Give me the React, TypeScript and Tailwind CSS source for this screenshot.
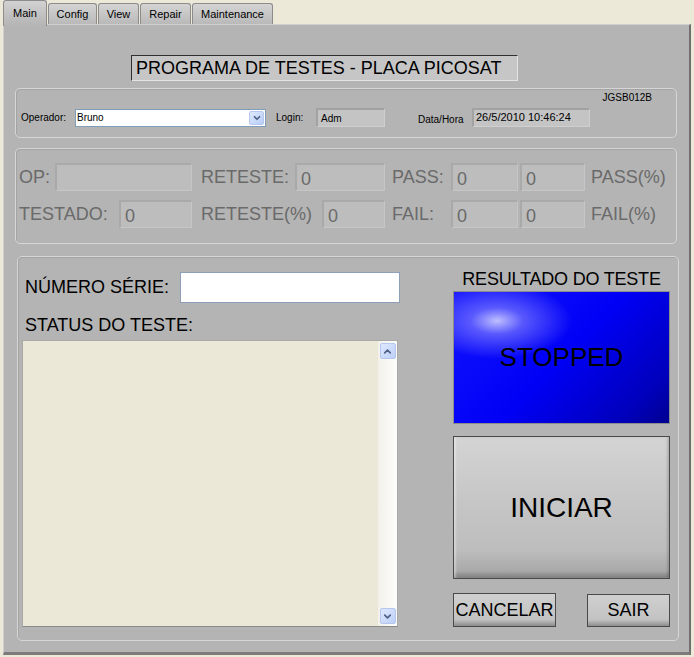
import { ChevronDown, ChevronUp } from 'lucide-react'

const tabs = [
  { label: 'Main', w: 'w-[44px]', active: true },
  { label: 'Config', w: 'w-[49px]', active: false },
  { label: 'View', w: 'w-[41px]', active: false },
  { label: 'Repair', w: 'w-[51px]', active: false },
  { label: 'Maintenance', w: 'w-[81px]', active: false },
]

function Field({ w, value }: { w: string; value?: string }) {
  return (
    <div
      className={`${w} h-[28px] bg-[#bdbdbd] border-t-2 border-l-2 border-[#a9a9a9] border-r border-b border-r-[#c6c6c6] border-b-[#c6c6c6] pl-[4px] pt-[2px] text-[18px] leading-[24px] text-[#6a6a6a]`}
    >
      {value}
    </div>
  )
}

function XpArrow({ up }: { up?: boolean }) {
  return (
    <div className="w-[16px] h-[16px] rounded-[2px] border border-[#b5c6ef] bg-[linear-gradient(135deg,#dfe8fd,#bcd0fa)] flex items-center justify-center">
      {up ? (
        <ChevronUp className="w-[11px] h-[11px] text-[#4d6185]" strokeWidth={3.5} />
      ) : (
        <ChevronDown className="w-[11px] h-[11px] text-[#4d6185]" strokeWidth={3.5} />
      )}
    </div>
  )
}

export default function App() {
  return (
    <div className="w-[694px] h-[657px] bg-[#ece9d8] font-['Liberation_Sans',Arial,sans-serif] text-black overflow-hidden">
      {/* tab strip */}
      <div className="flex items-end h-[24px] pl-[3px] gap-[1px]">
        {tabs.map((t) => (
          <div
            key={t.label}
            className={`${t.w} ${
              t.active
                ? 'h-[26px] -mb-[2px] relative z-10 pt-[4px] bg-[linear-gradient(to_bottom,#d2d2d2,#b4b4b4)]'
                : 'h-[21px] pt-[2px] bg-[linear-gradient(to_bottom,#d4d4d4,#b9b9b9)]'
            } border border-b-0 border-[#8c8c8c] rounded-t-[3px] text-[11px] flex items-start justify-center`}
          >
            {t.label}
          </div>
        ))}
      </div>

      {/* main panel */}
      <div className="ml-[3px] w-[688px] h-[631px] bg-[#b4b4b4] border-t border-l border-t-[#cfcfcf] border-l-[#d0d0d0] border-r-2 border-b-[3px] border-r-[#6f6f6f] border-b-[#7b7b7b] flex flex-col">
        <div className="mt-[30px] ml-[127px] w-[387px] h-[26px] bg-[#c6c6c6] border-t border-l border-t-[#303030] border-l-[#303030] border-r border-b border-r-[#e4e4e4] border-b-[#e4e4e4] text-[18px] leading-[24px] pl-[4px] whitespace-nowrap">
          PROGRAMA DE TESTES - PLACA PICOSAT
        </div>

        {/* operador box */}
        <div className="mt-[7px] ml-[11px] w-[662px] h-[50px] rounded-[5px] border border-[#d6d6d6] shadow-[inset_1px_1px_0_#a4a4a4] flex flex-col">
          <div className="h-[14px] mt-[2px] text-[10px] leading-[14px] text-right pr-[24px]">JGSB012B</div>
          <div className="flex items-center mt-[3px] text-[10px]">
            <span className="ml-[5px] w-[54px]">Operador:</span>
            <div className="w-[191px] h-[18px] bg-white border border-[#7f9db9] flex items-center justify-between pl-[1px]">
              <span className="text-[10px]">Bruno</span>
              <div className="w-[15px] h-[14px] mr-[1px] rounded-[2px] bg-[linear-gradient(135deg,#dfe8fd,#b8cdf8)] border border-[#b5c6ef] flex items-center justify-center">
                <ChevronDown className="w-[10px] h-[10px] text-[#4d6185]" strokeWidth={4} />
              </div>
            </div>
            <span className="ml-[10px] w-[40px]">Login:</span>
            <div className="w-[69px] h-[19px] bg-[#c4c4c4] border-t-2 border-l-2 border-[#a2a2a2] border-r border-b border-r-[#cfcfcf] border-b-[#cfcfcf] pl-[3px] pt-[2px] leading-[13px]">
              Adm
            </div>
            <span className="ml-[33px] w-[54px] mt-[4px]">Data/Hora</span>
            <div className="w-[118px] h-[19px] bg-[#c4c4c4] border-t-2 border-l-2 border-[#a2a2a2] border-r border-b border-r-[#cfcfcf] border-b-[#cfcfcf] pl-[2px] pt-[1px] leading-[13px] text-[11px]">
              26/5/2010 10:46:24
            </div>
          </div>
        </div>

        {/* counters box */}
        <div className="mt-[10px] ml-[11px] w-[662px] h-[96px] rounded-[5px] border border-[#d6d6d6] shadow-[inset_1px_1px_0_#a4a4a4] pt-[14px] flex flex-col gap-[9px] text-[18px] text-[#6a6a6a]">
          <div className="flex items-center pl-[3px]">
            <span className="w-[36px]">OP:</span>
            <Field w="w-[137px]" />
            <span className="ml-[9px] w-[94px]">RETESTE:</span>
            <Field w="w-[90px]" value="0" />
            <span className="ml-[7px] w-[59px]">PASS:</span>
            <Field w="w-[67px]" value="0" />
            <div className="ml-[2px]" />
            <Field w="w-[65px]" value="0" />
            <span className="ml-[6px]">PASS(%)</span>
          </div>
          <div className="flex items-center pl-[3px]">
            <span className="w-[100px]">TESTADO:</span>
            <Field w="w-[73px]" value="0" />
            <span className="ml-[9px] w-[121px]">RETESTE(%)</span>
            <Field w="w-[63px]" value="0" />
            <span className="ml-[7px] w-[59px]">FAIL:</span>
            <Field w="w-[67px]" value="0" />
            <div className="ml-[2px]" />
            <Field w="w-[65px]" value="0" />
            <span className="ml-[6px]">FAIL(%)</span>
          </div>
        </div>

        {/* test box */}
        <div className="mt-[12px] ml-[13px] w-[662px] h-[385px] rounded-[5px] border border-[#d6d6d6] shadow-[inset_1px_1px_0_#a4a4a4] flex text-[18px]">
          <div className="w-[382px] ml-[4px] flex flex-col">
            <div className="flex items-center mt-[15px] h-[31px]">
              <span className="ml-[3px] w-[155px]">NÚMERO SÉRIE:</span>
              <div className="w-[220px] h-[31px] bg-white border border-[#8ea0b8]" />
            </div>
            <div className="h-[37px] pl-[3px] pt-[11px] leading-[22px]">STATUS DO TESTE:</div>
            <div className="w-[376px] h-[287px] bg-[#ebe8d8] border border-[#a8a8a8] border-b-[#8a8a8a] flex justify-end">
              <div className="w-[19px] h-full bg-[linear-gradient(to_right,#f2f1ea,#fdfdfb)] flex flex-col justify-between items-center py-[2px]">
                <XpArrow up />
                <XpArrow />
              </div>
            </div>
          </div>

          <div className="ml-[49px] w-[217px] flex flex-col">
            <div className="mt-[11px] h-[23px] leading-[22px] text-center whitespace-nowrap tracking-[-0.2px]">RESULTADO DO TESTE</div>
            <div className="h-[133px] bg-[radial-gradient(ellipse_75px_38px_at_20%_22%,rgba(200,200,255,0.95)_0%,rgba(140,140,255,0.6)_35%,rgba(40,40,255,0)_100%),linear-gradient(135deg,#1414ff_0%,#0000f6_50%,#0000bc_85%,#000090_100%)] border border-[#8c8c8c] flex items-center justify-center text-[26px]">
              STOPPED
            </div>
            <div className="mt-[12px] h-[143px] border border-[#4a4a4a] bg-[linear-gradient(to_bottom,#d4d4d4_0%,#c6c6c6_45%,#bdbdbd_80%,#a9a9a9_95%,#7e7e7e_100%)] shadow-[inset_2px_0_2px_rgba(255,255,255,0.35),inset_-2px_0_2px_rgba(0,0,0,0.15)] flex items-center justify-center text-[28px]">
              INICIAR
            </div>
            <div className="mt-[14px] flex justify-between items-start">
              <div className="w-[103px] h-[34px] border border-[#4a4a4a] bg-[linear-gradient(to_bottom,#d0d0d0,#c2c2c2_80%,#8c8c8c)] flex items-center justify-center">
                CANCELAR
              </div>
              <div className="mt-[1px] w-[83px] h-[33px] border border-[#4a4a4a] bg-[linear-gradient(to_bottom,#d0d0d0,#c2c2c2_80%,#8c8c8c)] flex items-center justify-center">
                SAIR
              </div>
            </div>
          </div>
        </div>
      </div>
    </div>
  )
}
